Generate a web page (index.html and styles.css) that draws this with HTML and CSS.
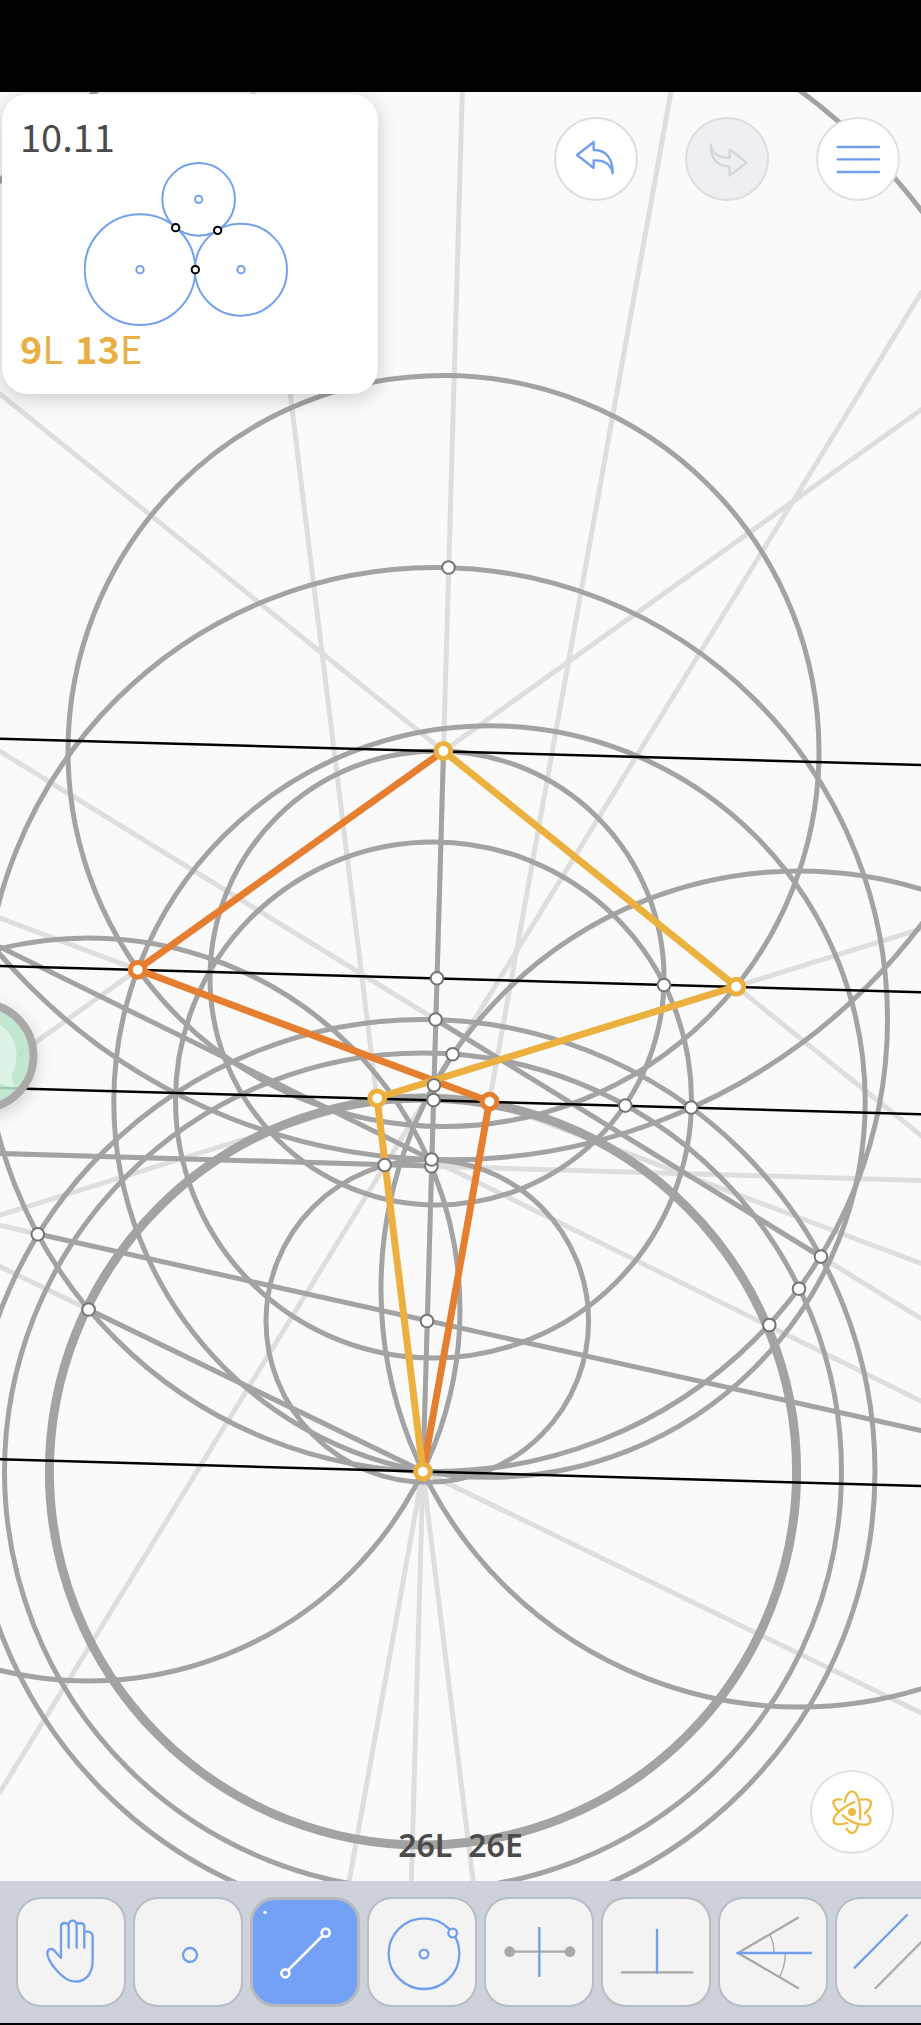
FILE: index.html
```html
<!DOCTYPE html>
<html lang="en">
<head>
<meta charset="utf-8">
<meta name="viewport" content="width=device-width, initial-scale=1">
<title>10.11</title>
<link rel="stylesheet" href="styles.css">
</head>
<body>
<div class="status-bar"></div>
<main class="workspace">
  <svg class="board" viewBox="0 92 921 1789" preserveAspectRatio="xMidYMid slice" aria-hidden="true">
    <g class="guide">
      <path d="M462.3 92L410.9 1896"/>
      <path d="M670.9 92L348 1888"/>
      <path d="M253.1 92L474 1888"/>
      <path d="M0 394L921 1135.5"/>
      <path d="M0 1067.7L921 410"/>
      <path d="M0 918L921 1263.3"/>
      <path d="M0 1215L921 929"/>
      <path d="M0 1792L921 293"/>
      <path d="M0 751.4L921 1318.4"/>
      <path d="M0 1153.5L921 1180.5"/>
      <path d="M0 1225.5L38 1234"/>
      <path d="M0 1266.6L921 1712.7"/>
      <path d="M431.5 1159.5L921 1401"/>
    </g>
    <g class="stroke">
      <circle cx="443.5" cy="751" r="375.5"/>
      <circle cx="435.5" cy="1019.5" r="452"/>
      <circle cx="489.5" cy="1101.5" r="375.7"/>
      <circle cx="437" cy="978" r="227"/>
      <circle cx="433.5" cy="1100" r="258"/>
      <circle cx="423" cy="1471.5" r="418.5"/>
      <circle cx="423" cy="1471.5" r="452"/>
      <circle cx="427.3" cy="1321" r="161.3"/>
      <circle cx="88.5" cy="1309.5" r="371.5"/>
      <circle cx="799" cy="1289" r="418"/>
      <circle cx="448.5" cy="567.5" r="592.3"/>
      <circle class="thick" cx="423" cy="1471.5" r="373.6"/>
      <path d="M443.5 751L423 1471.5"/>
      <path d="M452.5 1054L434 1085"/>
      <path d="M435.5 1019.5L820.5 1256.5"/>
      <path d="M0 1153.5L431.3 1166"/>
      <path d="M38 1234L921 1430.5"/>
      <path d="M88.5 1309.5L423 1471.5"/>
      <path d="M0 947L431.5 1159.5"/>
    </g>
    <g class="given">
      <path d="M0 738.7L921 765"/>
      <path d="M0 966L921 992.3"/>
      <path d="M0 1088L921 1114.3"/>
      <path d="M0 1459.3L921 1486"/>
    </g>
    <path class="orange" d="M443.5 751L137.5 969.5L489.5 1101.5L423 1471.5"/>
    <path class="yellow" d="M443.5 751L736 986.5L377 1098L423 1471.5"/>
    <g class="point">
      <circle cx="448.5" cy="567.5" r="6.3"/>
      <circle cx="437" cy="978.3" r="6.3"/>
      <circle cx="435.6" cy="1019.5" r="6.3"/>
      <circle cx="452.6" cy="1054.3" r="6.3"/>
      <circle cx="434" cy="1085.3" r="6.3"/>
      <circle cx="433.5" cy="1100" r="6.3"/>
      <circle cx="625.3" cy="1105.6" r="6.3"/>
      <circle cx="691.2" cy="1107.5" r="6.3"/>
      <circle cx="664" cy="985" r="6.3"/>
      <circle cx="431.4" cy="1166.3" r="6.3"/>
      <circle cx="431.6" cy="1159.5" r="6.3"/>
      <circle cx="384.6" cy="1165" r="6.3"/>
      <circle cx="427" cy="1321" r="6.3"/>
      <circle cx="37.8" cy="1234.3" r="6.3"/>
      <circle cx="88.6" cy="1309.5" r="6.3"/>
      <circle cx="769.3" cy="1325" r="6.3"/>
      <circle cx="799" cy="1288.7" r="6.3"/>
      <circle cx="820.9" cy="1256.6" r="6.3"/>
    </g>
    <g class="vertex vertex-orange">
      <circle cx="137.7" cy="969.8" r="7.4"/>
      <circle cx="489.5" cy="1101.6" r="7.4"/>
    </g>
    <g class="vertex vertex-yellow">
      <circle cx="443.4" cy="751" r="7.4"/>
      <circle cx="736.2" cy="986.7" r="7.4"/>
      <circle cx="377.2" cy="1098.3" r="7.4"/>
      <circle cx="423" cy="1471.6" r="7.4"/>
    </g>
  </svg>

  <button class="assist" type="button" aria-label="Assistant">
    <svg viewBox="-75.5 999.5 114 114" aria-hidden="true">
      <circle class="assist-fill" cx="-18.5" cy="1056.5" r="49"/>
      <path class="assist-bubble" d="M-18.5 1021C4 1021 17 1037 17 1056C17 1068 12 1073 12 1077C12 1081 15 1083 14 1087C10 1088 5 1085 0 1084C-5 1087 -12 1090 -18.5 1090C-38 1090 -54 1075 -54 1056C-54 1037 -38 1021 -18.5 1021Z"/>
      <circle class="assist-ring" cx="-18.5" cy="1056.5" r="52.5"/>
    </svg>
  </button>

  <header class="top">
    <section class="card">
      <h1 class="level">10.11</h1>
      <svg class="figure" viewBox="252 246 612 492" aria-hidden="true">
        <g class="figure-lines">
          <circle cx="596" cy="358" r="109"/>
          <circle cx="420" cy="569" r="166"/>
          <circle cx="723" cy="569" r="138"/>
          <circle cx="596" cy="358" r="11"/>
          <circle cx="420" cy="569" r="11"/>
          <circle cx="723" cy="569" r="11"/>
        </g>
        <g class="figure-points">
          <circle cx="527" cy="443" r="11"/>
          <circle cx="653" cy="451" r="11"/>
          <circle cx="586" cy="569" r="11"/>
        </g>
      </svg>
      <p class="goal"><span><b>9</b>L</span><span><b>13</b>E</span></p>
    </section>
    <nav class="actions">
      <button class="round" type="button" aria-label="Undo">
        <svg class="blue" viewBox="151 164 144 144"><path d="M166 224L216 185V209C252 208 274 234 273 279C268 250 248 239 216 240V263Z"/></svg>
      </button>
      <button class="round round-off" type="button" aria-label="Redo" disabled>
        <svg viewBox="548 164 144 144"><path d="M679 246L628 208V232C598 233 576 222 571 192C570 234 592 259 628 258V286Z"/></svg>
      </button>
      <button class="round round-strong" type="button" aria-label="Menu">
        <svg class="blue" viewBox="940 166 144 144"><path d="M951 202H1075M951 239H1075M951 277H1075"/></svg>
      </button>
    </nav>
  </header>

  <footer class="bottom">
    <p class="moves"><span>26L</span><span>26E</span></p>
    <button class="round round-strong hint" type="button" aria-label="Explore">
      <svg class="atom" viewBox="1105 715 144 144">
        <path d="M1155 757C1160 735 1168 725 1177 725C1192 725 1202 755 1202 790L1201 808"/>
        <path d="M1161 837C1166 846 1171 850 1177 850C1186 850 1192 840 1195 827"/>
        <path d="M1145 750C1127 747 1118 753 1122 764C1125 772 1130 779 1137 786"/>
        <path d="M1149 797C1165 812 1190 825 1210 825C1232 827 1240 815 1225 797"/>
        <path d="M1184 757C1150 772 1120 796 1122 815C1126 828 1145 825 1163 820"/>
        <path d="M1204 750C1225 747 1236 752 1234 763C1232 774 1224 784 1215 792"/>
        <circle cx="1177" cy="787" r="12"/>
      </svg>
    </button>
  </footer>
</main>

<div class="toolbar" role="toolbar" aria-label="Tools">
  <button class="tool" type="button" aria-label="Move">
    <svg viewBox="55 117 318 318"><path class="b" d="M184 294V200Q184 189 194 189Q205 189 207 198V263M207 194Q209 182 219 182Q229 182 231 194V263M231 192Q235 189 242 189Q254 190 254 200V263M254 215H263Q279 216 279 230V300C279 340 260 365 228 365C187 365 144 302 143 280C143 268 154 264 162 270L184 294"/></svg>
  </button>
  <button class="tool" type="button" aria-label="Point">
    <svg viewBox="406 117 318 318"><circle class="b" cx="571" cy="285" r="21"/></svg>
  </button>
  <button class="tool tool-on" type="button" aria-label="Line" aria-pressed="true">
    <svg viewBox="760 120 312 312"><path class="w" d="M867 329L968 228"/><circle class="w" cx="978" cy="218" r="12"/><circle class="w" cx="857" cy="340" r="12"/><circle class="dot" cx="796" cy="157" r="5"/></svg>
  </button>
  <button class="tool" type="button" aria-label="Circle">
    <svg viewBox="1108 117 318 318"><circle class="b" cx="1273" cy="281" r="106"/><circle class="b" cx="1273" cy="282" r="13"/><circle class="b face" cx="1359" cy="219" r="13"/></svg>
  </button>
  <button class="tool" type="button" aria-label="Perpendicular bisector">
    <svg viewBox="80 117 318 318"><path class="g" d="M151 275H332"/><circle class="gdot" cx="151" cy="275" r="16"/><circle class="gdot" cx="332" cy="275" r="16"/><path class="b" d="M240 204V348"/></svg>
  </button>
  <button class="tool" type="button" aria-label="Perpendicular">
    <svg viewBox="431 117 318 318"><path class="g" d="M488 337H699"/><path class="b" d="M593 210V338"/></svg>
  </button>
  <button class="tool" type="button" aria-label="Angle bisector">
    <svg viewBox="782 117 318 318"><path class="g" d="M1016 173L836 279L1016 384"/><path class="g thin" d="M931 223Q944 248 944 278M978 280Q978 318 961 350"/><path class="b" d="M834 279H1055"/></svg>
  </button>
  <button class="tool" type="button" aria-label="Parallel">
    <svg viewBox="1133 117 318 318"><path class="b" d="M1186 323L1343 165"/><path class="g" d="M1249 384L1406 226"/></svg>
  </button>
</div>
<div class="home-bar"></div>
</body>
</html>
```
FILE: styles.css
```css
* { box-sizing: border-box; }

body {
  margin: 0;
  min-height: 100vh;
  display: flex;
  flex-direction: column;
  overflow-x: hidden;
  background: #fafafa;
  font-family: "Noto Sans CJK SC", "Noto Sans", sans-serif;
  color: #4b4b4b;
}

h1, p { margin: 0; font-weight: 400; }

button {
  padding: 0;
  border: 0;
  font: inherit;
  cursor: pointer;
}

svg {
  display: block;
  fill: none;
  stroke-linecap: round;
  stroke-linejoin: round;
}

.status-bar { height: 92px; background: #000; }
.home-bar { height: 2px; background: #000; }

.workspace {
  position: relative;
  flex: 1;
  display: flex;
  flex-direction: column;
  justify-content: space-between;
  overflow: hidden;
}

.board {
  position: absolute;
  inset: 0;
  width: 100%;
  height: 100%;
}

.guide { stroke: #dedede; stroke-width: 5; }
.stroke { stroke: #a3a3a3; stroke-width: 5; }
.thick { stroke-width: 9; }
.given { stroke: #000; stroke-width: 2.5; }
.orange { stroke: #e67e30; stroke-width: 7; }
.yellow { stroke: #ecb03e; stroke-width: 7; }
.point { fill: #fff; stroke: #757575; stroke-width: 2; }
.vertex { fill: #fff; stroke-width: 5; }
.vertex-orange { stroke: #e67e30; }
.vertex-yellow { stroke: #ecb03e; }

.assist {
  position: absolute;
  left: -76px;
  top: 907px;
  width: 114px;
  height: 114px;
  border-radius: 50%;
  background: none;
  box-shadow: 0 5px 16px rgba(0, 0, 0, .16);
}

.assist-fill { fill: #b9e6c9; fill-opacity: .88; }
.assist-bubble { fill: #fff; fill-opacity: .45; }
.assist-ring { stroke: #a9a9a9; stroke-width: 8; }

.top {
  position: relative;
  display: flex;
  justify-content: space-between;
  align-items: flex-start;
  padding: 2px 21px 0 2px;
}

.card {
  width: 376px;
  padding: 22px 18px 26px;
  border-radius: 26px;
  background: #fff;
  box-shadow: 0 4px 20px rgba(0, 0, 0, .2);
}

.level, .goal {
  font-size: 38px;
  line-height: 40px;
}

.figure {
  width: 204px;
  margin: 6px 0 2px 64px;
}

.figure-lines { stroke: #74a1ee; stroke-width: 6; }
.figure-points { fill: #fff; stroke: #000; stroke-width: 6; }

.goal {
  display: flex;
  gap: 12px;
  color: #e8b044;
}

.actions {
  display: flex;
  gap: 47px;
  padding-top: 23px;
}

.round {
  display: grid;
  place-items: center;
  width: 84px;
  height: 84px;
  border: 2px solid #dcdede;
  border-radius: 50%;
  background: #fff;
}

.round svg { width: 48px; stroke: #d2d6d8; stroke-width: 7; }
.round .blue { stroke: #719fec; }
.round-off { background: #eeeff2; }
.round-strong { border: 2px solid #e0e0e0; }
.round .atom { stroke: #edbb44; stroke-width: 7; }
.round .atom circle { fill: #edbb44; stroke: none; }

.bottom {
  position: relative;
  display: grid;
  grid-template-columns: 1fr auto 1fr;
  align-items: end;
  padding: 0 27px 16px;
}

.moves {
  grid-column: 2;
  display: flex;
  gap: 16px;
  font-family: "Noto Sans", "Open Sans", sans-serif;
  font-size: 32px;
  line-height: 40px;
  font-weight: 600;
}

.hint {
  justify-self: end;
  margin-bottom: 11px;
}

.toolbar {
  display: flex;
  gap: 7px;
  padding: 16px;
  overflow: hidden;
  background: #ccd1da;
}

.tool {
  flex: none;
  width: 110px;
  height: 110px;
  border: 2px solid #b8bcc3;
  border-radius: 25px;
  background: #f3f3f3;
}

.tool svg { width: 100%; }
.tool-on { border: 3px solid #b5b9bf; background: #73a1f5; }

.b { stroke: #719fec; stroke-width: 7; }
.g { stroke: #a9a9a9; stroke-width: 7; }
.w { stroke: #fff; stroke-width: 8; }
.thin { stroke-width: 4; }
.face { fill: #f3f3f3; }
.dot { fill: #fff; }
.gdot { fill: #a9a9a9; }
```
